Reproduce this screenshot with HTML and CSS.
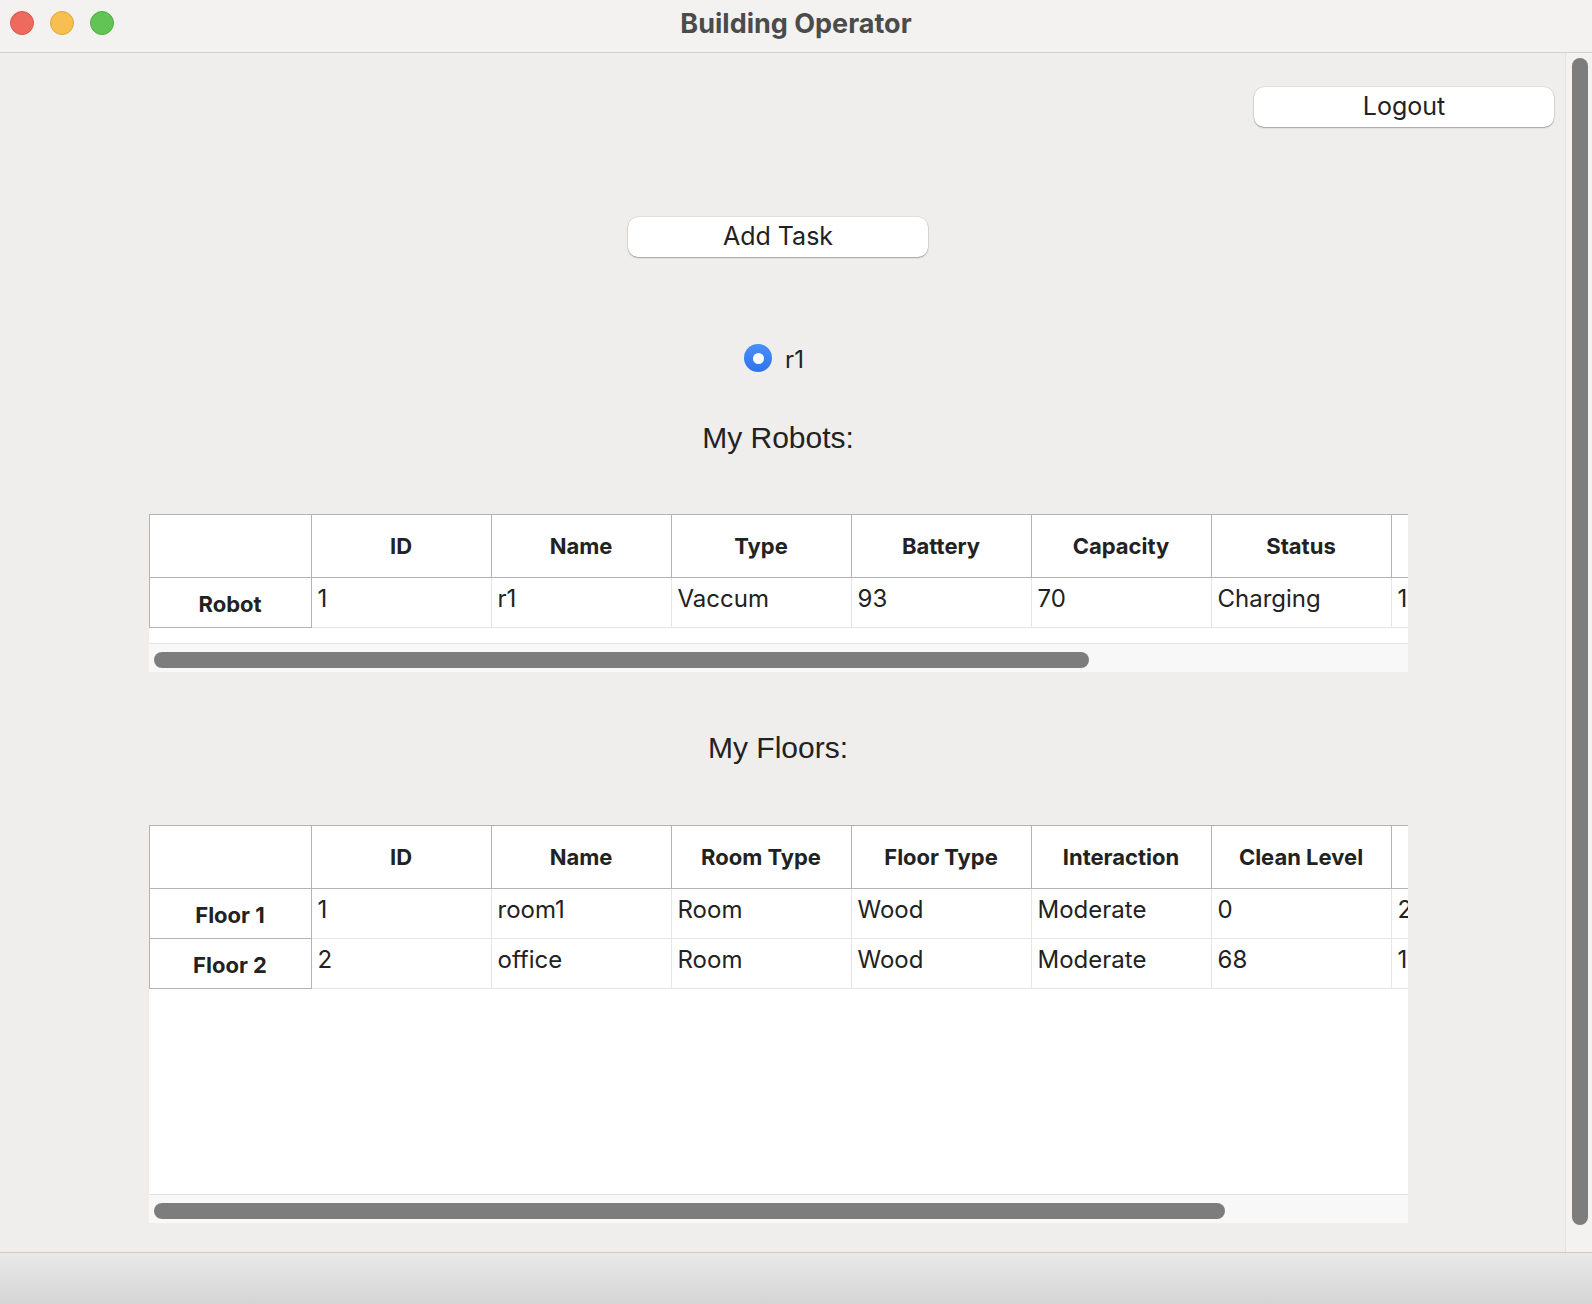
FILE: index.html
```html
<!DOCTYPE html>
<html lang="en">
<head>
<meta charset="utf-8">
<title>Building Operator</title>
<link rel="stylesheet" href="styles.css">
</head>
<body>
<div class="window">
  <header class="titlebar">
    <div class="lights">
      <span class="light red"></span>
      <span class="light yellow"></span>
      <span class="light green"></span>
    </div>
    <div class="title">Building Operator</div>
  </header>

  <div class="main">
    <div class="content">
      <div class="top-row">
        <button class="btn logout">Logout</button>
      </div>
      <button class="btn add-task">Add Task</button>
      <label class="radio">
        <span class="radio-dot"></span>
        <span class="radio-label">r1</span>
      </label>

      <h2 class="section-title">My Robots:</h2>
      <div class="table-view robots-view">
        <div class="viewport robots-viewport">
          <table class="grid">
            <thead>
              <tr>
                <th class="corner"></th>
                <th class="col">ID</th>
                <th class="col">Name</th>
                <th class="col">Type</th>
                <th class="col">Battery</th>
                <th class="col">Capacity</th>
                <th class="col">Status</th>
                <th class="col"></th>
              </tr>
            </thead>
            <tbody>
              <tr>
                <th class="row-head">Robot</th>
                <td>1</td>
                <td>r1</td>
                <td>Vaccum</td>
                <td>93</td>
                <td>70</td>
                <td>Charging</td>
                <td>1</td>
              </tr>
            </tbody>
          </table>
        </div>
        <div class="hscroll"><div class="hthumb" style="width: 935px"></div></div>
      </div>

      <h2 class="section-title floors-title">My Floors:</h2>
      <div class="table-view floors-view">
        <div class="viewport floors-viewport">
          <table class="grid">
            <thead>
              <tr>
                <th class="corner"></th>
                <th class="col">ID</th>
                <th class="col">Name</th>
                <th class="col">Room Type</th>
                <th class="col">Floor Type</th>
                <th class="col">Interaction</th>
                <th class="col">Clean Level</th>
                <th class="col"></th>
              </tr>
            </thead>
            <tbody>
              <tr>
                <th class="row-head">Floor 1</th>
                <td>1</td>
                <td>room1</td>
                <td>Room</td>
                <td>Wood</td>
                <td>Moderate</td>
                <td>0</td>
                <td>2</td>
              </tr>
              <tr>
                <th class="row-head">Floor 2</th>
                <td>2</td>
                <td>office</td>
                <td>Room</td>
                <td>Wood</td>
                <td>Moderate</td>
                <td>68</td>
                <td>1</td>
              </tr>
            </tbody>
          </table>
        </div>
        <div class="hscroll"><div class="hthumb" style="width: 1071px"></div></div>
      </div>
    </div>
    <div class="vscroll"><div class="vthumb"></div></div>
  </div>

  <footer class="statusbar"></footer>
</div>
</body>
</html>
```

FILE: styles.css
```css
* { box-sizing: border-box; }

html, body {
  margin: 0;
  padding: 0;
}

body {
  width: 1592px;
  height: 1304px;
  overflow: hidden;
  font-family: Inter, "Noto Sans", "Liberation Sans", sans-serif;
  color: #222222;
  background: #efeeec;
}

.window {
  display: flex;
  flex-direction: column;
  width: 1592px;
  height: 1304px;
}

/* ---------- title bar ---------- */
.titlebar {
  position: relative;
  height: 53px;
  flex: none;
  display: flex;
  align-items: center;
  justify-content: center;
  background: #f3f2f0;
  border-bottom: 1px solid #d2d1cf;
}

.lights {
  position: absolute;
  left: 10px;
  top: 11px;
  display: flex;
  gap: 16px;
}

.light {
  width: 24px;
  height: 24px;
  border-radius: 50%;
}
.light.red { background: #ee6a5f; border: 1px solid #d8564b; }
.light.yellow { background: #f6bf4f; border: 1px solid #dea73b; }
.light.green { background: #61c454; border: 1px solid #4fae43; }

.title {
  font-size: 27px;
  font-weight: 700;
  color: #4b4b4b;
  margin-top: -6px;
}

/* ---------- main area ---------- */
.main {
  flex: 1;
  display: flex;
  min-height: 0;
}

.content {
  width: 1565px;
  padding-right: 9px;
  display: flex;
  flex-direction: column;
  align-items: center;
}

.top-row {
  align-self: stretch;
  display: flex;
  justify-content: flex-end;
  padding-right: 2px;
  margin-top: 34px;
}

.btn {
  width: 300px;
  height: 40px;
  border: 0;
  border-radius: 10px;
  background: #ffffff;
  box-shadow: 0 0 0 0.5px rgba(0, 0, 0, 0.12), 0 1px 1.5px rgba(0, 0, 0, 0.28);
  font-family: Inter, "Noto Sans", "Liberation Sans", sans-serif;
  font-size: 25px;
  color: #222222;
  padding: 0 0 2px 0;
}

.add-task {
  margin-top: 90px;
}

.radio {
  margin-top: 87px;
  height: 28px;
  display: flex;
  align-items: center;
  gap: 13px;
  margin-left: -8px;
}

.radio-dot {
  width: 28px;
  height: 28px;
  border-radius: 50%;
  background: linear-gradient(#4b8ff8, #2e72f0);
  display: flex;
  align-items: center;
  justify-content: center;
}
.radio-dot::after {
  content: "";
  width: 11px;
  height: 11px;
  border-radius: 50%;
  background: #ffffff;
}

.radio-label {
  font-size: 24px;
  line-height: 28px;
  padding-top: 3px;
  color: #222222;
}

.section-title {
  margin: 48px 0 58px 0;
  font-family: "Liberation Sans", Arial, sans-serif;
  font-weight: 400;
  font-size: 30px;
  line-height: 36px;
  color: #222222;
}
.floors-title {
  margin-top: 58px;
  margin-bottom: 59px;
}

/* ---------- table views ---------- */
.table-view {
  width: 1259px;
  display: flex;
  flex-direction: column;
}

.viewport {
  background: #ffffff;
  overflow: hidden;
}
.robots-viewport { height: 129px; }
.floors-viewport { height: 369px; }

.grid {
  border-collapse: separate;
  border-spacing: 0;
  table-layout: fixed;
  width: 1423px;
}

.grid th,
.grid td {
  padding: 0;
  white-space: nowrap;
  overflow: hidden;
}

.grid thead th {
  border-top: 1px solid #b3b3b3;
  border-bottom: 1px solid #b3b3b3;
  border-right: 1px solid #b3b3b3;
  height: 64px;
  line-height: 62px;
  font-size: 22px;
  font-weight: 700;
  text-align: center;
  color: #222222;
  width: 180px;
}

.grid thead th.corner {
  width: 163px;
  border-left: 1px solid #b3b3b3;
}

.grid th.row-head {
  border-left: 1px solid #b3b3b3;
  border-right: 1px solid #b3b3b3;
  border-bottom: 1px solid #b3b3b3;
  font-size: 22px;
  font-weight: 700;
  text-align: center;
  vertical-align: top;
  line-height: 28px;
  height: 50px;
  padding-top: 12px;
  color: #222222;
}

.grid td {
  border-right: 1px solid #e6e6e6;
  border-bottom: 1px solid #e6e6e6;
  font-size: 24px;
  line-height: 28px;
  vertical-align: top;
  height: 50px;
  padding: 7px 0 0 6px;
  color: #222222;
}

.hscroll {
  height: 29px;
  border-top: 1px solid #e3e3e3;
  background: #f8f8f8;
  padding: 8px 0 0 5px;
}

.hthumb {
  height: 16px;
  border-radius: 8px;
  background: #7d7d7d;
}

/* ---------- vertical scrollbar ---------- */
.vscroll {
  flex: 1;
  border-left: 1px solid #e3e2e0;
  background: #f3f2f0;
  padding: 5px 0 0 6px;
}

.vthumb {
  width: 16px;
  height: 1167px;
  border-radius: 8px;
  background: #7d7d7d;
}

/* ---------- status bar ---------- */
.statusbar {
  height: 52px;
  flex: none;
  border-top: 1px solid #cbcbcb;
  background: linear-gradient(#e9e9e9, #d5d5d5);
}
```
